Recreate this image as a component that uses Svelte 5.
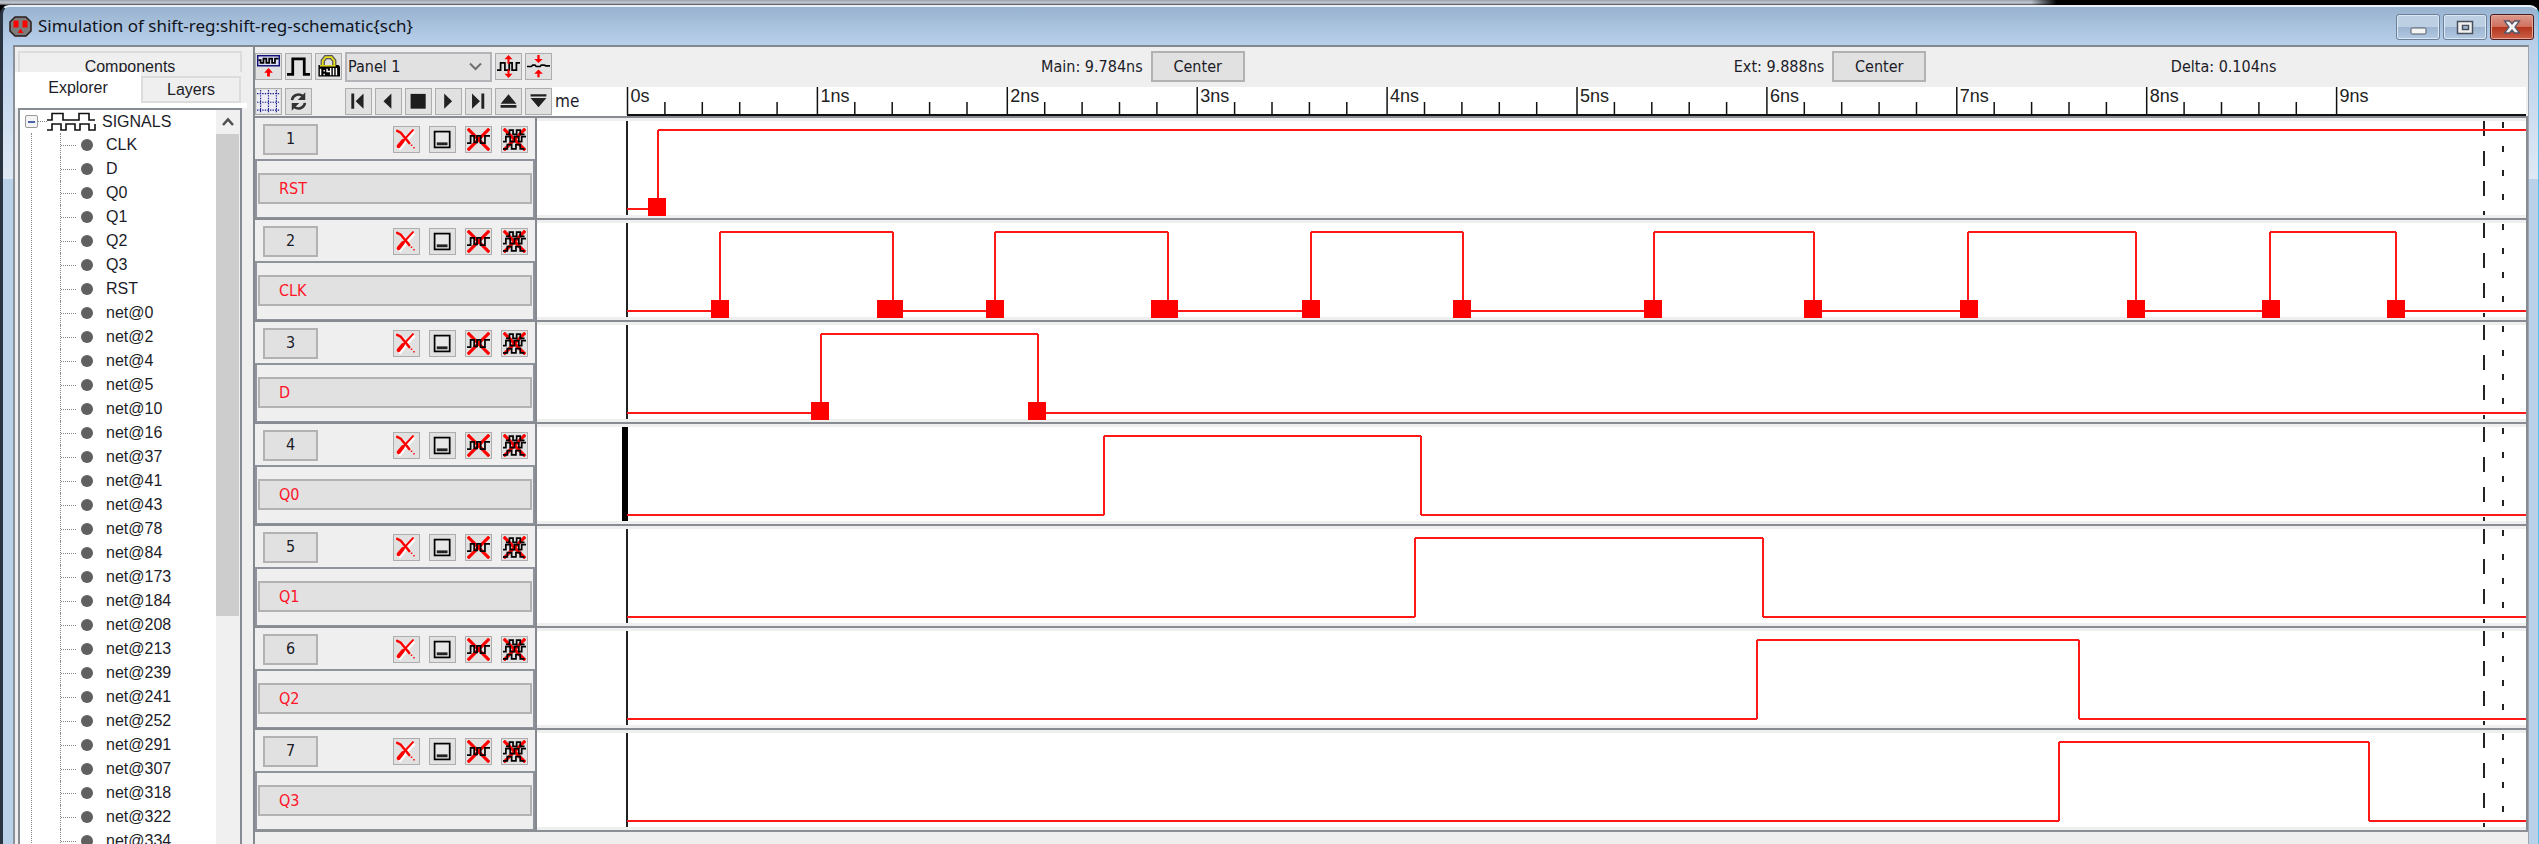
<script>
  const nets = [0, 2, 4, 5, 10, 16, 37, 41, 43, 78, 84, 173, 184, 208, 213, 239, 241, 252, 291, 307, 318, 322, 334];
  const signals = ['CLK', 'D', 'Q0', 'Q1', 'Q2', 'Q3', 'RST', ...nets.map((n) => 'net@' + n)];

  const WAVE = { origin: 537, span: 1989 };
  const RULER = { origin: 552, span: 1974 };
  const pct = (x, axis = WAVE) => ((x - axis.origin) / axis.span) * 100 + '%';
  const START = 627;
  const END = 2526;
  const HIGH = 9;
  const LOW = 88;

  const panels = [
    { name: 'RST', edges: [658], marks: [[648, 18]] },
    {
      name: 'CLK',
      edges: [720, 893, 995, 1168, 1311, 1463, 1654, 1814, 1968, 2136, 2270, 2396],
      marks: [[711, 18], [877, 26], [986, 18], [1151, 27], [1302, 18], [1453, 18], [1644, 18], [1804, 18], [1960, 18], [2127, 18], [2262, 18], [2387, 18]]
    },
    { name: 'D', edges: [821, 1038], marks: [[811, 18], [1028, 18]] },
    { name: 'Q0', edges: [1104, 1421], marks: [], current: true },
    { name: 'Q1', edges: [1415, 1763], marks: [] },
    { name: 'Q2', edges: [1757, 2079], marks: [] },
    { name: 'Q3', edges: [2059, 2369], marks: [] }
  ];

  function segments(edges) {
    const out = [];
    let x = START;
    let y = LOW;
    for (const e of edges) {
      out.push([x, y, e, y]);
      out.push([e, HIGH, e, LOW]);
      x = e;
      y = y === LOW ? HIGH : LOW;
    }
    out.push([x, y, END, y]);
    return out;
  }

  const ticks = [];
  for (let i = 0; i < 10; i++) {
    const x = 627.5 + i * 189.9;
    const minor = i < 9 ? [1, 2, 3, 4].map((k) => x + k * 37.4) : [];
    ticks.push({ x, label: i === 0 ? '0s' : i + 'ns', minor });
  }
</script>

{#snippet pulses(d)}
  <path {d} fill="none" stroke="#000" stroke-width="1.200" />
{/snippet}

<div class="screen">
  <div class="backdrop"></div>
  <div class="window">
    <header class="title">
      <svg class="logo" width="23" height="21" viewBox="0 0 23 21">
        <path d="M6 1H17L22 6V15L17 20H6L1 15V6Z" fill="#7c7c7c" stroke="#2b1b1b" stroke-width="1.500" stroke-linejoin="round" />
        <path d="M4.500 4.500h5v7h-5zM13.500 4.500h5v7h-5zM11.500 12.500l2.800 4.500h-5.600z" fill="#f00" />
      </svg>
      <h1>Simulation of shift-reg:shift-reg-schematic&#123;sch&#125;</h1>
      <div class="winbuttons">
        <button aria-label="Minimize"><svg width="20" height="20"><rect x="3" y="11" width="15" height="6" rx="1" fill="#f4f4f4" stroke="#555d6b" /></svg></button>
        <button aria-label="Maximize"><svg width="20" height="20"><path d="M2.500 4.500h15v12h-15z M7.500 8.500v4h6v-4z" fill="#f0f0f0" fill-rule="evenodd" stroke="#48505e" stroke-width="1.500" /></svg></button>
        <button class="close" aria-label="Close"><svg width="20" height="20"><path d="M2.500 4h5l2.500 3 2.500-3h5l-4.500 6 4.500 6h-5l-2.500-3-2.500 3h-5l4.500-6z" fill="#f4f4f4" stroke="#55556a" stroke-width="1.300" /></svg></button>
      </div>
    </header>

    <div class="body">
      <aside class="sidebar">
        <div class="tabs">
          <button class="tab back">Components</button>
          <div class="tabrow">
            <button class="tab active">Explorer</button>
            <button class="tab">Layers</button>
          </div>
        </div>
        <div class="tree">
          <div class="nodes">
            <div class="root">
              <button class="expander" aria-label="Collapse"></button>
              <span class="dots"></span>
              <svg width="49" height="20" viewBox="0 0 49 20">
                <path d="M0 8H5V1.500H16V8H32V1.500H42V8H48M0 18H5V12H14V18H19V12H28V18H33V12H42V18H48V12" fill="none" stroke="#111" stroke-width="1.600" />
              </svg>
              <span class="rootname">SIGNALS</span>
            </div>
            <ul>
              {#each signals as s}
                <li><span class="dots"></span><span class="dot"></span>{s}</li>
              {/each}
            </ul>
          </div>
          <div class="scroll">
            <button aria-label="Scroll up"><svg width="12" height="10" viewBox="0 0 12 10"><path d="M1 8L6 2.500L11 8" fill="none" stroke="#505050" stroke-width="2.600" /></svg></button>
            <div class="thumb"></div>
          </div>
        </div>
      </aside>

      <main>
        <div class="top">
          <div class="toolbar">
            <div class="tools first">
              <button class="ico" aria-label="New panel"><svg viewBox="0 0 16 16"><rect x=".5" y=".5" width="15" height="7" fill="#dedef4" stroke="#10107a" />{@render pulses('M1 3.500H2.500V5.500H4.500V2.500H6.500V5.500H8.500V2.500H10.500V5.500H12.500V2.500H15')}<path d="M8 9L11 12.300H9V15H7V12.300H5Z" fill="#f00" /></svg></button>
              <button class="ico" aria-label="Digital signal"><svg viewBox="0 0 16 16"><path d="M0 13.500H4V2.700H12V13.500H16" fill="none" stroke="#000" stroke-width="1.900" /></svg></button>
              <button class="ico" aria-label="Lock time"><svg viewBox="0 0 16 16"><path d="M4 8V4L6 1.500H10L12 4V8" fill="none" stroke="#555" stroke-width="3" /><path d="M4 8V4L6 1.500H10L12 4V8" fill="none" stroke="#e8e020" stroke-width="1.300" /><path d="M1 7H15L16 8V15H1Z" fill="#000" /><path d="M2 7.500H13" stroke="#e8e020" /><path d="M2.500 9.500V14M5 10.500v1M5 13v1M7 9.500v2h2M9.500 9v5M11.500 9v5M13.500 9v5" stroke="#fff" fill="none" /></svg></button>
              <span class="combo">
                <select aria-label="Panel"><option>Panel 1</option></select>
                <svg width="13" height="9" viewBox="0 0 13 9"><path d="M1 1.500L6.500 7L12 1.500" fill="none" stroke="#707070" stroke-width="2" /></svg>
              </span>
              <button class="ico" aria-label="Grow panels"><svg viewBox="0 0 16 16">{@render pulses('M0 10.500H2.500V5.500H5.500V10.500H8.500V5.500H10.500V10.500H13.500V5.500H16')}<path d="M8 0L10.800 3H8.700V6H7.300V3H5.200ZM8 16L10.800 13H8.700V10H7.300V13H5.200Z" fill="#f00" /></svg></button>
              <button class="ico" aria-label="Shrink panels"><svg viewBox="0 0 16 16">{@render pulses('M0 8H3L4 7H5.500L6.500 8H9L10 7H12L13 7.500H16')}<path d="M8 5.500L11 2.800H8.800V0H7.200V2.800H5ZM8 10L11 13H8.800V15.500H7.200V13H5Z" fill="#f00" /></svg></button>
            </div>
            <div class="tools">
              <button class="ico" aria-label="Grid"><svg viewBox="0 0 16 16"><rect width="16" height="16" fill="#ececf4" /><path d="M2.500 0V16M8 0V16M13.500 0V16M0 2.500H16M0 8.500H16M0 14H16" stroke="#20208c" stroke-width=".8" stroke-dasharray="1 .8" /></svg></button>
              <button class="ico" aria-label="Refresh"><svg viewBox="0 0 16 16"><g fill="none" stroke="#333" stroke-width="1.800"><path d="M3.500 7C4 3.500 8 2 11 4.200M12.500 9C12 12.500 8 14 5 11.800" /></g><path d="M12.700 1.500V7H7.500ZM3.300 14.500V9H8.500Z" fill="#333" /></svg></button>
              <span class="space"></span>
              <button class="ico" aria-label="To start"><svg viewBox="0 0 16 16"><path d="M3 2.500H5V13H3ZM11.500 2.500V13L6 7.800Z" fill="#222" /></svg></button>
              <button class="ico" aria-label="Play backward"><svg viewBox="0 0 16 16"><path d="M10 2.500V13L4.500 7.800Z" fill="#222" /></svg></button>
              <button class="ico" aria-label="Stop"><svg viewBox="0 0 16 16"><path d="M2.500 2.700H13V13H2.500Z" fill="#1c1c1c" /></svg></button>
              <button class="ico" aria-label="Play"><svg viewBox="0 0 16 16"><path d="M5 2.500V13L10.500 7.800Z" fill="#222" /></svg></button>
              <button class="ico" aria-label="To end"><svg viewBox="0 0 16 16"><path d="M3.500 2.500V13L9 7.800ZM10 2.500H12V13H10Z" fill="#222" /></svg></button>
              <button class="ico" aria-label="Faster"><svg viewBox="0 0 16 16"><path d="M8 3L13.500 9.500H2.500ZM2.500 10.500H13.500V12.300H2.500Z" fill="#222" /></svg></button>
              <button class="ico" aria-label="Slower"><svg viewBox="0 0 16 16"><path d="M8 12L2.500 5.500H13.500ZM2.500 3H13.500V4.600H2.500Z" fill="#222" /></svg></button>
            </div>
          </div>
          <div class="timing">
            <div class="cursors">
              <div class="cursor main"><span>Main: 9.784ns</span><button class="push">Center</button></div>
              <div class="cursor ext"><span>Ext: 9.888ns</span><button class="push">Center</button></div>
              <div class="cursor delta"><span>Delta: 0.104ns</span></div>
            </div>
            <div class="ruler">
              <svg width="100%" height="29">
                <line class="base" x1={pct(627, RULER)} x2="100%" y1="28" y2="28" />
                {#each ticks as t}
                  <line x1={pct(t.x, RULER)} x2={pct(t.x, RULER)} y1="0" y2="28" />
                  {#each t.minor as m}
                    <line x1={pct(m, RULER)} x2={pct(m, RULER)} y1="15" y2="28" />
                  {/each}
                  <text x={pct(t.x + 3, RULER)} y="15">{t.label}</text>
                {/each}
              </svg>
              <span class="caption">me</span>
            </div>
          </div>
        </div>

        {#each panels as p, i}
          <section class="panel">
            <div class="controls">
              <div class="head">
                <button class="push num">{i + 1}</button>
                <button class="ico" aria-label="Close panel"><svg viewBox="0 0 16 16"><path d="M3 15L9 7.500L13.500 2.500M5 4L11 11" stroke="#fff" stroke-width="2" fill="none" /><path d="M2 12.500L6 8.500L12.500 1.500" stroke="#f00" stroke-width="1.400" fill="none" stroke-linecap="round" /><path d="M2.500 12.700L5.500 9" stroke="#f00" stroke-width="2.600" stroke-linecap="round" /><path d="M1.500 2L4 3.300L10 10.500" stroke="#f00" stroke-width="1.700" fill="none" stroke-linecap="round" /><path d="M11 11.500h1v1h-1zM12.700 13.200h1v1h-1z" fill="#f00" /></svg></button>
                <button class="ico" aria-label="Minimize panel"><svg viewBox="0 0 16 16"><rect x="2.500" y="2.500" width="10.500" height="11" fill="#e8e8e8" stroke="#000" stroke-width="1.200" /><path d="M4 10H11.500V12H4Z" fill="#222" /></svg></button>
                <button class="ico" aria-label="Delete signal"><svg viewBox="0 0 16 16"><path d="M.5 .5L15.500 15.500M15.500 .5L.5 15.500" stroke="#f00" stroke-width="2.200" />{@render pulses('M0 10.500H2.500V5.500H5V10H7V5.500H9.500V10.500H12.500V5.500H16')}</svg></button>
                <button class="ico" aria-label="Delete all signals"><svg viewBox="0 0 16 16"><path d="M.5 .5L15.500 15.500M15.500 .5L.5 15.500" stroke="#f00" stroke-width="2.200" />{@render pulses('M2 4.500H4.500V1.500H7V4.500H9.500V1.500H12V4.500H15M0 9.500H2V6H5V9.500H8V6H11V9.500H13V6H16M0 14.500H3V11.500H6V14.500H9V11.500H12V14.500H15')}</svg></button>
              </div>
              <div class="names">
                <button class="signal">{p.name}</button>
              </div>
            </div>
            <svg class="wave" width="100%" height="95">
              {#if p.current}
                <rect x={pct(622)} y="0" width="6" height="94" fill="#000" />
              {:else}
                <line class="axis" x1={pct(START)} x2={pct(START)} y1="0" y2="94" />
              {/if}
              <line class="axis" x1={pct(2484)} x2={pct(2484)} y1="0" y2="94" stroke-dasharray="15 15" />
              <line class="axis" x1={pct(2503)} x2={pct(2503)} y1="1" y2="94" stroke-dasharray="6 18" />
              {#each segments(p.edges) as [x1, y1, x2, y2]}
                <line class="trace" x1={pct(x1)} {y1} x2={pct(x2)} {y2} />
              {/each}
              {#each p.marks as [x, w]}
                <rect x={pct(x)} y="77" width={w} height="18" fill="#f00" />
              {/each}
            </svg>
          </section>
        {/each}
        <div class="foot"></div>
      </main>
    </div>
  </div>
</div>

<style>
  :global(body) { margin: 0; overflow: hidden; }
  * { box-sizing: border-box; }
  button, select { margin: 0; padding: 0; border: 0; font: inherit; color: inherit; border-radius: 0; }
  svg { display: block; }
  .screen {
    display: flex;
    flex-direction: column;
    height: 100vh;
    overflow: hidden;
    background: #000;
    color: #1c1c28;
    font: 16px/20px "DejaVu Sans Condensed", "Noto Sans", sans-serif;
  }
  .backdrop {
    flex: none;
    height: 5px;
    background: linear-gradient(90deg, transparent 80%, #000 81%), linear-gradient(#9aa3ad, #c5cdd6 60%, #444);
  }
  .window {
    flex: 1;
    min-height: 0;
    display: flex;
    flex-direction: column;
    padding: 0 9px 0 10px;
    border-left: 3px solid #2a3440;
    border-right: 1px solid #58c4ea;
    border-top: 2px solid #e8eff7;
    border-radius: 9px 9px 0 0;
    background:
      linear-gradient(#98b3d0, #b9d0ea) 0 0 / 100% 38px no-repeat,
      linear-gradient(#b9d0ea, #dfe9f5) 0 38px / 100% 134px no-repeat,
      #bad1ea;
  }
  .title {
    flex: none;
    height: 38px;
    display: flex;
    align-items: center;
    gap: 6px;
    margin: 0 -5px 0 -4px;
  }
  h1 { flex: 1; margin: 0; font: 17px/22px "Noto Sans", "Open Sans", sans-serif; color: #10141c; }
  .winbuttons { display: flex; gap: 3px; align-self: flex-start; padding-top: 7px; }
  .winbuttons button {
    width: 44px;
    height: 26px;
    display: grid;
    place-items: center;
    border: 1px solid #6b7f99;
    border-radius: 3px;
    box-shadow: inset 0 0 0 1px #dce8f4;
    background: linear-gradient(#bccfe3 50%, #9cb4cf 50%, #b4cae3);
  }
  .winbuttons .close {
    border-color: #4a1a1c;
    box-shadow: inset 0 0 0 1px #e8a898;
    background: linear-gradient(#dc9a8c, #cf6f5c 50%, #b4341c 50%, #cc6048);
  }
  .body { flex: 1; min-height: 0; display: flex; gap: 6px; background: #efefef; border-top: 2px solid #84888f; border-right: 1px solid #a0a4ac; }

  .sidebar {
    flex: none;
    width: 234px;
    display: flex;
    flex-direction: column;
    border-left: 2px solid #8c9098;
    font: 16px/20px "Liberation Sans", sans-serif;
  }
  .tabs { flex: none; padding-top: 4px; }
  .tab { background: #efefef; border: 2px solid #dcdcdc; }
  .back { display: block; width: 224px; height: 21px; margin-left: 3px; padding-top: 4px; border-bottom: 0; overflow: hidden; text-align: center; }
  .tabrow { display: flex; align-items: flex-end; height: 36px; border-bottom: 5px solid #fff; }
  .tabrow .tab { width: 100px; height: 27px; }
  .tabrow .active { width: 126px; height: 31px; background: #fff; border: 0; }
  .tree {
    flex: 1;
    min-height: 0;
    display: flex;
    width: 224px;
    margin-left: 3px;
    border: 2px solid #868b94;
    border-bottom: 0;
    background: #fff;
    overflow: hidden;
  }
  .nodes { flex: 1; padding-left: 5px; }
  .root { display: flex; align-items: center; height: 23px; }
  .expander { width: 13px; height: 13px; border: 1px solid #999; border-radius: 2px; background: linear-gradient(#4b63a7, #4b63a7) center / 7px 2px no-repeat #f4f4f4; }
  .dots { width: 9px; border-top: 1px dotted #888; }
  .rootname { padding-left: 6px; }
  ul { list-style: none; margin: 0 0 0 6px; padding: 0 0 0 28px; border-left: 1px dotted #888; }
  li { display: flex; align-items: center; height: 24px; border-left: 1px dotted #888; }
  li .dots { width: 15px; }
  .dot { width: 12px; height: 12px; margin: 0 13px 0 5px; border-radius: 50%; background: #606060; }
  .scroll { width: 24px; background: #f0f0f0; }
  .scroll button { display: grid; place-items: center; width: 100%; height: 24px; background: #f0f0f0; }
  .thumb { height: 482px; background: #cdcdcd; margin-right: 1px; }

  main { flex: 1; min-width: 0; display: flex; flex-direction: column; border-left: 2px solid #84888f; }
  .top { flex: none; display: flex; height: 69px; }
  .toolbar { width: 297px; padding-top: 4px; }
  .tools { display: flex; align-items: center; gap: 3px; }
  .tools.first { height: 31px; margin-bottom: 6px; }
  .space { width: 27px; }
  .ico { flex: none; width: 27px; height: 27px; padding: 1px; border: 1px solid #adadad; background: #e1e1e1; }
  .ico svg { width: 23px; height: 23px; }
  .combo { display: flex; align-items: center; width: 149px; height: 30px; padding: 0 8px 0 1px; border: 2px solid #b4b4b8; background: #e1e1e1; }
  select { flex: 1; min-width: 0; appearance: none; background: none; outline: 0; }
  .timing { flex: 1; min-width: 0; display: flex; flex-direction: column; }
  .cursors { height: 40px; display: grid; grid-template-columns: 2fr auto 2fr auto 1fr auto 1fr; align-items: center; padding: 0 7px 1px 0; }
  .cursor { display: flex; align-items: center; gap: 8px; }
  .main { grid-column: 2; }
  .ext { grid-column: 4; }
  .delta { grid-column: 6; }
  .push { width: 94px; height: 31px; border: 2px solid #b2b2b2; background: #e1e1e1; }
  .ruler { position: relative; height: 29px; margin-right: 2px; background: #fff; }
  .ruler line { stroke: #111; stroke-width: 1.5px; }
  .ruler .base { stroke-width: 2px; }
  .ruler text { font: 18px "Liberation Sans", sans-serif; fill: #222; }
  .caption { position: absolute; left: 3px; top: 4px; font-size: 17px; }

  .panel {
    flex: none;
    display: flex;
    align-items: flex-start;
    height: 102px;
    padding-top: 3px;
    border-top: 2px solid #888c92;
    border-right: 2px solid #888b91;
    background: linear-gradient(#efefef 3px, #fff 3px, #fff 97px, #efefef 97px);
  }
  .controls { flex: none; width: 282px; height: 100px; margin-top: -3px; background: #efefef; border-right: 2px solid #84888f; }
  .head { display: flex; align-items: center; gap: 9px; height: 41px; padding: 1px 7px 0 8px; }
  .num { width: 55px; margin-right: auto; }
  .names { height: 59px; padding: 12px 1px 0; border: 2px solid #8f949c; border-bottom-width: 1px; }
  .signal { display: block; width: 100%; height: 31px; padding-left: 19px; border: 2px solid #b2b2b2; background: #e1e1e1; color: #ff1428; text-align: left; }
  .wave { flex: 1; min-width: 0; }
  .axis { stroke: #222; stroke-width: 2px; }
  .trace { stroke: #ff1818; stroke-width: 2px; }
  .foot { border-top: 2px solid #8c8f94; }
</style>
